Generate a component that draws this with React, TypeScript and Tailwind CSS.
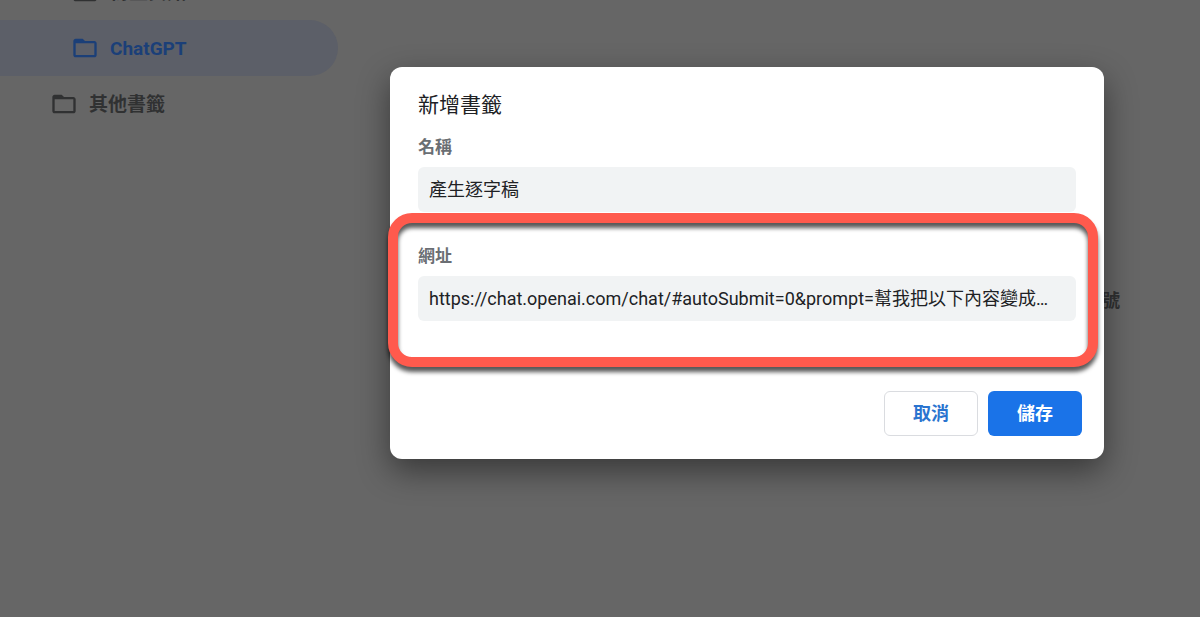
import { MdFolderOpen } from "react-icons/md";

interface Folder {
    name: string;
    nested?: boolean;
    active?: boolean;
}

const folders: Folder[] = [
    { name: "衍生資訊", nested: true },
    { name: "ChatGPT", nested: true, active: true },
    { name: "其他書籤" },
];

function FolderRow({ folder }: { folder: Folder }) {
    return (
        <a
            href="#folder"
            className={`flex h-14 items-center gap-[11px] rounded-r-full text-[19px] font-bold ${folder.nested ? "pl-[71px]" : "pl-[50px]"} ${folder.active ? "bg-[#5c5f68] text-[#1b3f78]" : "text-[#303132]"}`}
        >
            <MdFolderOpen size={28} className="shrink-0" />
            <span className="pt-0.5">{folder.name}</span>
        </a>
    );
}

function Field({ id, label, value }: { id: string; label: string; value: string }) {
    return (
        <div>
            <label htmlFor={id} className="block text-[17px] leading-6 font-bold text-[#6a6e73]">
                {label}
            </label>
            <input
                id={id}
                type="text"
                defaultValue={value}
                className="mt-2 block h-[45px] w-full rounded-md bg-[#f1f3f4] pr-5 pb-1 pl-[11px] text-lg text-ellipsis text-[#202124] outline-none"
            />
        </div>
    );
}

export default function App() {
    return (
        <div className="relative flex min-h-screen overflow-hidden bg-[#666666] font-['Roboto','Noto_Sans_CJK_TC',sans-serif]">
            {/* Folder tree, scrolled a little */}
            <nav className="-mt-9 w-[338px] shrink-0">
                {folders.map((folder) => (
                    <FolderRow key={folder.name} folder={folder} />
                ))}
            </nav>

            <main className="flex flex-1 items-center justify-end pr-20 pb-4">
                <p className="text-lg font-bold text-[#303132]">星號</p>
            </main>

            {/* Add bookmark dialog */}
            <div className="absolute inset-0 pt-[67px] pr-24 pl-[390px]">
                <form
                    role="dialog"
                    aria-labelledby="dialog-title"
                    className="rounded-xl bg-white px-7 pt-[22px] pb-[23px] shadow-[0_12px_32px_rgba(0,0,0,0.45)]"
                >
                    <h1 id="dialog-title" className="text-[21px] leading-8 text-[#202124]">
                        新增書籤
                    </h1>
                    <div className="mt-[14px]">
                        <Field id="name" label="名稱" value="產生逐字稿" />
                    </div>
                    <div className="relative mt-8">
                        <Field
                            id="url"
                            label="網址"
                            value="https://chat.openai.com/chat/#autoSubmit=0&prompt=幫我把以下內容變成逐字稿的格式"
                        />
                        {/* Red highlight around the URL field */}
                        <div className="pointer-events-none absolute -top-[31px] -right-[22px] -bottom-[46px] -left-[30px] rounded-3xl border-10 border-[#ff5a4d] drop-shadow-[0_5px_2px_rgba(0,0,0,0.65)]" />
                    </div>
                    <div className="-mr-[6px] mt-[70px] flex justify-end gap-[10px]">
                        <button type="button" className="h-[45px] w-[94px] rounded-md border border-[#dadce0] text-lg font-bold text-[#2a74cf]">
                            取消
                        </button>
                        <button type="submit" className="h-[45px] w-[94px] rounded-md bg-[#1a73e8] text-lg font-bold text-white">
                            儲存
                        </button>
                    </div>
                </form>
            </div>
        </div>
    );
}
